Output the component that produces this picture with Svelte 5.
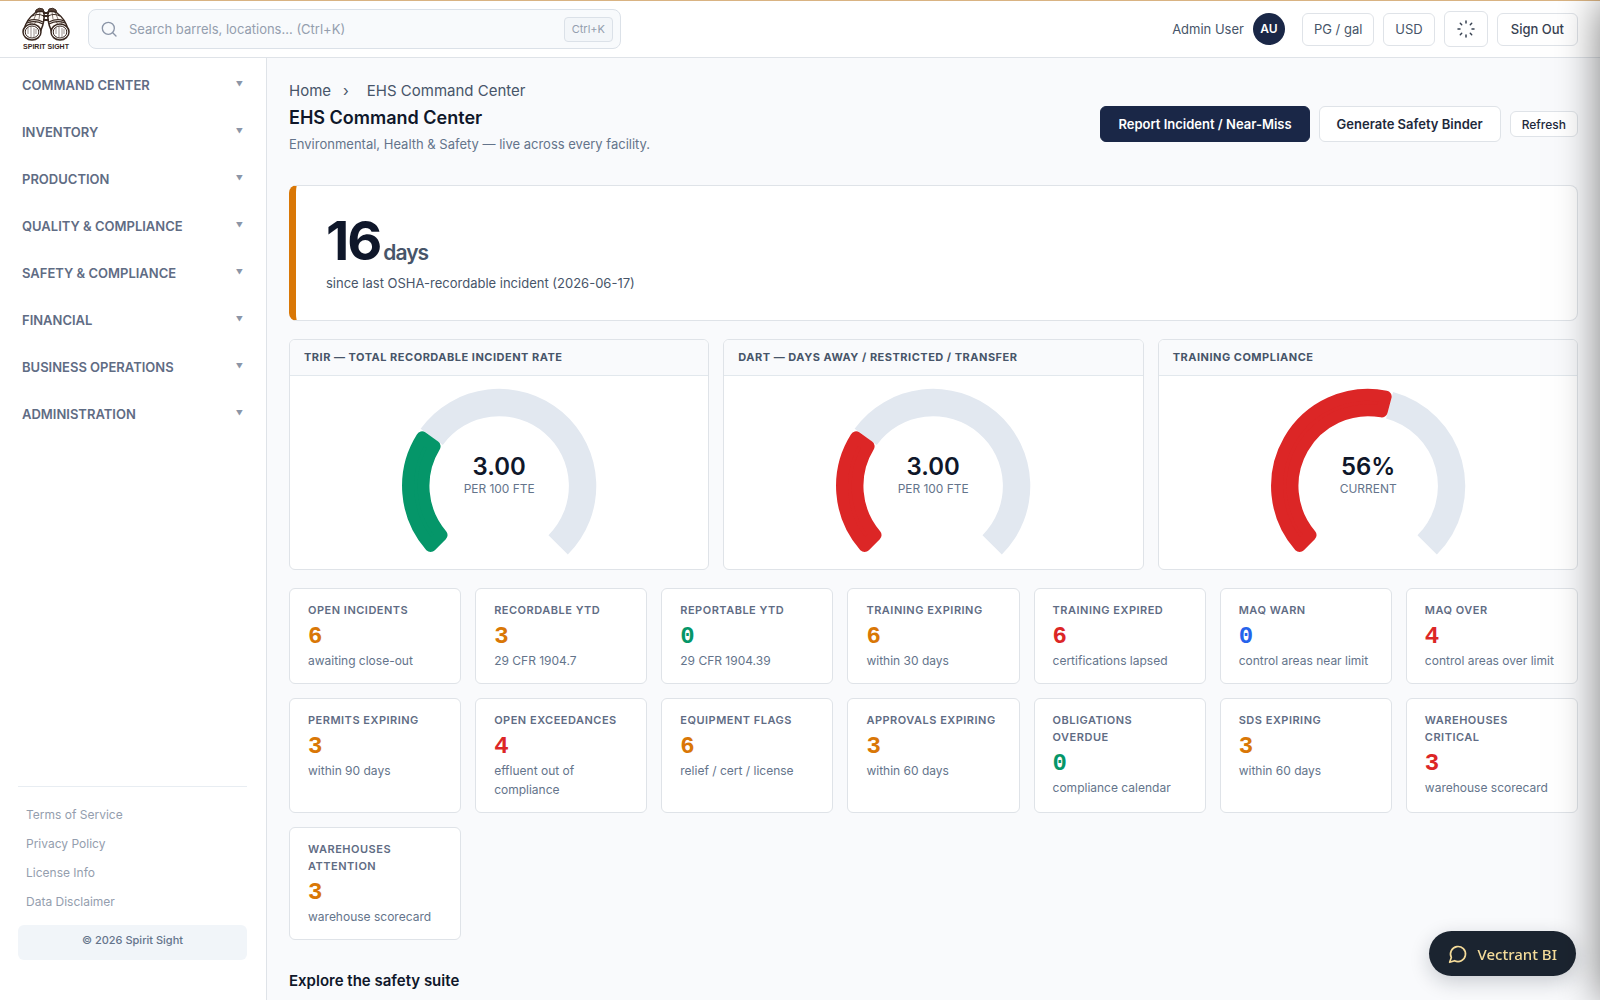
<script>
	const navSections = [
		'Command Center',
		'Inventory',
		'Production',
		'Quality & Compliance',
		'Safety & Compliance',
		'Financial',
		'Business Operations',
		'Administration'
	];

	const legalLinks = ['Terms of Service', 'Privacy Policy', 'License Info', 'Data Disclaimer'];

	const gauges = [
		{ title: 'TRIR — Total Recordable Incident Rate', value: '3.00', unit: 'PER 100 FTE', ratio: 0.3, color: '#059669' },
		{ title: 'DART — Days Away / Restricted / Transfer', value: '3.00', unit: 'PER 100 FTE', ratio: 0.3, color: '#dc2626' },
		{ title: 'Training Compliance', value: '56%', unit: 'CURRENT', ratio: 0.555, color: '#dc2626' }
	];

	const kpis = [
		{ label: 'Open Incidents', value: 6, note: 'awaiting close-out', tone: 'warn' },
		{ label: 'Recordable YTD', value: 3, note: '29 CFR 1904.7', tone: 'warn' },
		{ label: 'Reportable YTD', value: 0, note: '29 CFR 1904.39', tone: 'ok' },
		{ label: 'Training Expiring', value: 6, note: 'within 30 days', tone: 'warn' },
		{ label: 'Training Expired', value: 6, note: 'certifications lapsed', tone: 'bad' },
		{ label: 'MAQ Warn', value: 0, note: 'control areas near limit', tone: 'info' },
		{ label: 'MAQ Over', value: 4, note: 'control areas over limit', tone: 'bad' },
		{ label: 'Permits Expiring', value: 3, note: 'within 90 days', tone: 'warn' },
		{ label: 'Open Exceedances', value: 4, note: 'effluent out of compliance', tone: 'bad' },
		{ label: 'Equipment Flags', value: 6, note: 'relief / cert / license', tone: 'warn' },
		{ label: 'Approvals Expiring', value: 3, note: 'within 60 days', tone: 'warn' },
		{ label: 'Obligations Overdue', value: 0, note: 'compliance calendar', tone: 'ok' },
		{ label: 'SDS Expiring', value: 3, note: 'within 60 days', tone: 'warn' },
		{ label: 'Warehouses Critical', value: 3, note: 'warehouse scorecard', tone: 'bad' },
		{ label: 'Warehouses Attention', value: 3, note: 'warehouse scorecard', tone: 'warn' }
	];

	const CX = 210;
	const CY = 110;
	const OUTER = 97.5;
	const INNER = 70;

	function point(r, angle) {
		return `${(CX + r * Math.cos(angle)).toFixed(2)} ${(CY + r * Math.sin(angle)).toFixed(2)}`;
	}

	// the dial runs 270 degrees clockwise from the lower left;
	// inset leaves room for the rounded stroke around the value arc
	function arc(from, to, inset = 0) {
		const start = Math.PI * (0.75 + from * 1.5);
		const end = Math.PI * (0.75 + to * 1.5);
		const ro = OUTER - inset;
		const ri = INNER + inset;
		const large = end - start > Math.PI ? 1 : 0;
		return (
			`M${point(ro, start + inset / ro)} A${ro} ${ro} 0 ${large} 1 ${point(ro, end - inset / ro)} ` +
			`L${point(ri, end - inset / ri)} A${ri} ${ri} 0 ${large} 0 ${point(ri, start + inset / ri)}Z`
		);
	}

	let search = $state('');
</script>

<header class="topbar">
	<a class="logo" href="/" aria-label="Spirit Sight">
		<svg viewBox="0 0 48 34" fill="none" stroke="#38271f">
			<path d="M14 3 Q17 0 21 2 L22 5 L13 7Z" fill="#5b463c" />
			<path d="M34 3 Q31 0 27 2 L26 5 L35 7Z" fill="#5b463c" />
			<path d="M13 6 Q17 3 22 5 Q23 14 19 23 Q12 17 2 22 Q5 12 13 6Z" fill="#fffaf5" stroke-width="1.5" />
			<path d="M35 6 Q31 3 26 5 Q25 14 29 23 Q36 17 46 22 Q43 12 35 6Z" fill="#fffaf5" stroke-width="1.5" />
			<path d="M21 6h6M21 9h6M21 13h6" stroke-width="2" />
			<path d="M10 9Q16 6 22 9M6 14Q13 11 21 15M5 16Q13 13 21 17M38 9Q32 6 26 9M42 14Q35 11 27 15M43 16Q35 13 27 17" stroke-width="1.2" />
			<path d="M15 5L12 12M18 5L17 12M9 15L6 20M14 14L12 18M33 5L36 12M30 5L31 12M39 15L42 20M34 14L36 18" stroke-width=".6" />
			<ellipse cx="10" cy="25" rx="9" ry="8" fill="#fff" stroke-width="1.5" />
			<ellipse cx="38" cy="25" rx="9" ry="8" fill="#fff" stroke-width="1.5" />
			<ellipse cx="10" cy="25" rx="6.8" ry="6" stroke-width="1" />
			<ellipse cx="38" cy="25" rx="6.8" ry="6" stroke-width="1" />
			<path d="M6 21v6M9 20v10M12 21v9M14 22v5M34 21v6M37 20v10M40 21v9M42 22v5" stroke-width=".5" />
		</svg>
		<span>SPIRIT SIGHT</span>
	</a>
	<label class="search">
		<svg width="16" height="16" viewBox="0 0 24 24" fill="none" stroke="#8b95a7" stroke-width="2">
			<circle cx="11" cy="11" r="9" />
			<path d="M18 18l4.500 4.500" stroke-linecap="round" />
		</svg>
		<input type="search" aria-label="Search" placeholder="Search barrels, locations... (Ctrl+K)" bind:value={search} />
		<kbd>Ctrl+K</kbd>
	</label>
	<div class="account">
		<span class="user">Admin User</span>
		<span class="avatar">AU</span>
		<button class="chip">PG / gal</button>
		<button class="chip">USD</button>
		<button class="chip icon" aria-label="Toggle theme">
			<svg width="20" height="20" viewBox="0 0 20 20" stroke="#374151" stroke-width="1.5" stroke-linecap="round">
				<path d="M10 2v2M10 16v2M2 10h2M16 10h2M4.300 4.300l1.400 1.400M14.300 14.300l1.400 1.400M4.300 15.700l1.400-1.400M14.300 5.700l1.400-1.400" />
			</svg>
		</button>
		<button class="chip signout">Sign Out</button>
	</div>
</header>

<div class="layout">
	<aside class="sidebar">
		<nav>
			{#each navSections as section}
				<button class="section">{section}<span class="caret">▼</span></button>
			{/each}
		</nav>
		<footer>
			{#each legalLinks as link}
				<a href="#legal">{link}</a>
			{/each}
			<p>© 2026 Spirit Sight</p>
		</footer>
	</aside>

	<main>
		<div class="crumbs">
			<a href="/">Home</a><span class="sep">›</span><span>EHS Command Center</span>
		</div>
		<div class="page-head">
			<div>
				<h1>EHS Command Center</h1>
				<p>Environmental, Health &amp; Safety — live across every facility.</p>
			</div>
			<div class="actions">
				<button class="btn primary">Report Incident / Near-Miss</button>
				<button class="btn">Generate Safety Binder</button>
				<button class="btn small">Refresh</button>
			</div>
		</div>

		<section class="streak">
			<div class="count">16<span>days</span></div>
			<p>since last OSHA-recordable incident (2026-06-17)</p>
		</section>

		<section class="gauges">
			{#each gauges as g}
				<article class="gauge">
					<h2>{g.title}</h2>
					<svg viewBox="0 0 420 193" height="193">
						<path d={arc(g.ratio, 1)} fill="#e2e8f0" />
						<path d={arc(0, g.ratio, 6)} fill={g.color} stroke={g.color} stroke-width="12" stroke-linejoin="round" />
						<text x="210" y="99" class="reading">{g.value}</text>
						<text x="210" y="117" class="unit">{g.unit}</text>
					</svg>
				</article>
			{/each}
		</section>

		<section class="kpis">
			{#each kpis as k}
				<article class="kpi">
					<h3>{k.label}</h3>
					<div class="value {k.tone}">{k.value}</div>
					<p>{k.note}</p>
				</article>
			{/each}
		</section>

		<h2 class="suite">Explore the safety suite</h2>
	</main>
</div>

<button class="assistant">
	<svg width="20" height="20" viewBox="0 0 24 24" fill="none" stroke="#f5dc9a" stroke-width="2" stroke-linecap="round" stroke-linejoin="round">
		<path d="M7.900 20A9 9 0 1 0 4 16.100L2 22Z" />
	</svg>
	Vectrant BI
</button>
<div class="drawer"></div>

<style>
	:global(body) {
		background: #f9fafc;
		font-family: Inter, 'Liberation Sans', sans-serif;
		color: #0f172a;
	}

	:global(#app) {
		display: flex;
		flex-direction: column;
		height: 100vh;
	}

	button,
	input,
	kbd {
		font-family: inherit;
	}

	button {
		cursor: pointer;
	}

	h1,
	h2,
	h3,
	p {
		margin: 0;
	}

	.topbar {
		display: flex;
		align-items: center;
		box-sizing: border-box;
		height: 58px;
		padding: 0 22px;
		background: #fff;
		border-top: 1px solid #d9b382;
		border-bottom: 1px solid #dfe3e8;
	}

	.logo {
		display: flex;
		flex-direction: column;
		align-items: center;
		width: 48px;
		color: #38271f;
		text-decoration: none;
	}

	.logo svg {
		width: 48px;
		height: 36px;
	}

	.logo span {
		font: bold 7px/10px 'Liberation Sans Narrow', 'Liberation Sans', sans-serif;
		white-space: nowrap;
	}

	.search {
		display: flex;
		align-items: center;
		box-sizing: border-box;
		width: 533px;
		height: 40px;
		margin-left: 18px;
		padding: 0 7px 0 12px;
		background: #f8fafc;
		border: 1px solid #dbe1e8;
		border-radius: 8px;
	}

	.search input {
		flex: 1;
		padding: 0 0 0 12px;
		border: none;
		outline: none;
		background: transparent;
		font-size: 13px;
	}

	.search input::placeholder {
		color: #949eae;
	}

	kbd {
		padding: 4px 7px;
		border: 1px solid #dbe1e8;
		border-radius: 4px;
		background: #f3f6f9;
		font-size: 11px;
		line-height: 15px;
		color: #949eae;
	}

	.account {
		display: flex;
		align-items: center;
		gap: 9px;
		margin-left: auto;
		font-size: 13px;
		color: #475569;
	}

	.avatar {
		width: 32px;
		margin-right: 8px;
		border-radius: 50%;
		background: #1a2747;
		color: #fff;
		font-size: 12px;
		font-weight: 600;
		line-height: 32px;
		text-align: center;
	}

	.chip {
		height: 33px;
		padding: 0 11px;
		border: 1px solid #dfe3e8;
		border-radius: 6px;
		background: #fff;
		color: #475569;
		font-size: 13px;
	}

	.chip.icon {
		display: flex;
		align-items: center;
		height: 36px;
	}

	.chip.signout {
		padding: 0 13px;
		font-weight: 500;
		color: #374151;
	}

	.layout {
		display: flex;
		flex: 1;
		min-height: 0;
	}

	.sidebar {
		display: flex;
		flex-direction: column;
		flex: 0 0 267px;
		box-sizing: border-box;
		padding: 3px 19px 40px 18px;
		background: #fff;
		border-right: 1px solid #dfe3e8;
	}

	.section {
		display: flex;
		justify-content: space-between;
		align-items: center;
		width: 100%;
		height: 47px;
		padding: 0 4px;
		border: none;
		background: none;
		color: #5f6c84;
		font-size: 13px;
		font-weight: 600;
		text-transform: uppercase;
	}

	.caret {
		font-size: 7px;
		color: #8b95a7;
	}

	footer {
		display: flex;
		flex-direction: column;
		margin-top: auto;
		padding-top: 13px;
		border-top: 1px solid #e8edf2;
	}

	footer a {
		height: 29px;
		padding-left: 8px;
		color: #949eae;
		font-size: 12px;
		line-height: 29px;
		text-decoration: none;
	}

	footer p {
		margin-top: 9px;
		padding-bottom: 4px;
		border-radius: 6px;
		background: #f1f5f9;
		color: #64748b;
		font-size: 11px;
		font-weight: 500;
		line-height: 31px;
		text-align: center;
	}

	main {
		flex: 1;
		min-width: 0;
		padding: 22px 22px 0;
		overflow: hidden;
	}

	.crumbs {
		font-size: 15px;
		line-height: 22px;
		color: #475569;
	}

	.crumbs a {
		color: inherit;
		text-decoration: none;
	}

	.sep {
		margin: 0 18px 0 12px;
	}

	.page-head {
		display: flex;
		justify-content: space-between;
		margin-bottom: 29px;
	}

	h1 {
		font-size: 18px;
		font-weight: 600;
		line-height: 31px;
	}

	.page-head p {
		color: #64748b;
		font-size: 13px;
		line-height: 23px;
	}

	.actions {
		display: flex;
		align-items: center;
		gap: 9px;
		height: 44px;
	}

	.btn {
		height: 36px;
		padding: 0 17px;
		border: 1px solid #dfe3e8;
		border-radius: 6px;
		background: #fff;
		color: #1e293b;
		font-size: 13px;
		font-weight: 600;
	}

	.btn.primary {
		border-color: #1a2747;
		background: #1a2747;
		color: #fff;
	}

	.btn.small {
		height: 26px;
		padding: 0 11px;
		font-size: 12px;
		font-weight: 500;
	}

	.streak {
		padding: 27px 30px;
		border: 1px solid #dfe3e8;
		border-left: 7px solid #d97706;
		border-radius: 8px;
		background: #fff;
	}

	.count {
		display: flex;
		align-items: baseline;
		height: 56px;
		font-size: 54px;
		font-weight: 700;
		line-height: 56px;
		letter-spacing: -2px;
	}

	.count span {
		margin-left: 3px;
		color: #475569;
		font-size: 21px;
		font-weight: 600;
		letter-spacing: -1px;
	}

	.streak p {
		margin-top: 4px;
		color: #475569;
		font-size: 13px;
		line-height: 20px;
	}

	.gauges {
		display: grid;
		grid-template-columns: repeat(3, 1fr);
		gap: 14px;
		margin: 18px 0;
	}

	.gauge,
	.kpi {
		border: 1px solid #dfe3e8;
		border-radius: 6px;
		background: #fff;
	}

	.gauge {
		overflow: hidden;
	}

	.gauge h2 {
		padding: 0 14px;
		border-bottom: 1px solid #e2e8ed;
		background: #f9fafc;
		color: #475569;
		font-size: 11px;
		font-weight: 700;
		letter-spacing: 0.5px;
		line-height: 35px;
		text-transform: uppercase;
	}

	.gauge svg {
		display: block;
		width: 100%;
	}

	.reading {
		fill: #0f172a;
		font-size: 24px;
		font-weight: 600;
		text-anchor: middle;
	}

	.unit {
		fill: #64748b;
		font-size: 12px;
		text-anchor: middle;
	}

	.kpis {
		display: grid;
		grid-template-columns: repeat(7, 1fr);
		gap: 14px;
	}

	.kpi {
		padding: 13px 18px;
	}

	.kpi h3 {
		color: #5f6c84;
		font-size: 11px;
		font-weight: 600;
		letter-spacing: 0.5px;
		line-height: 17px;
		text-transform: uppercase;
	}

	.value {
		margin-top: 4px;
		font: bold 24px/28px 'Liberation Mono', monospace;
	}

	.warn {
		color: #d97706;
	}

	.ok {
		color: #059669;
	}

	.bad {
		color: #dc2626;
	}

	.info {
		color: #2563eb;
	}

	.kpi p {
		color: #64748b;
		font-size: 12px;
		line-height: 19px;
	}

	.suite {
		margin-top: 29px;
		font-size: 15px;
		font-weight: 600;
		line-height: 24px;
	}

	.assistant {
		position: fixed;
		right: 24px;
		bottom: 24px;
		display: flex;
		align-items: center;
		gap: 10px;
		height: 45px;
		padding: 0 19px;
		border: none;
		border-radius: 23px;
		background: #1b2430;
		box-shadow: 0 6px 20px rgba(15, 23, 42, 0.2);
		color: #f5dc9a;
		font-family: 'Noto Sans', sans-serif;
		font-size: 15px;
		font-weight: 500;
	}

	.drawer {
		position: fixed;
		top: 0;
		bottom: 0;
		left: 100%;
		width: 400px;
		box-shadow: 0 0 40px rgba(0, 0, 0, 0.5);
		pointer-events: none;
	}
</style>
